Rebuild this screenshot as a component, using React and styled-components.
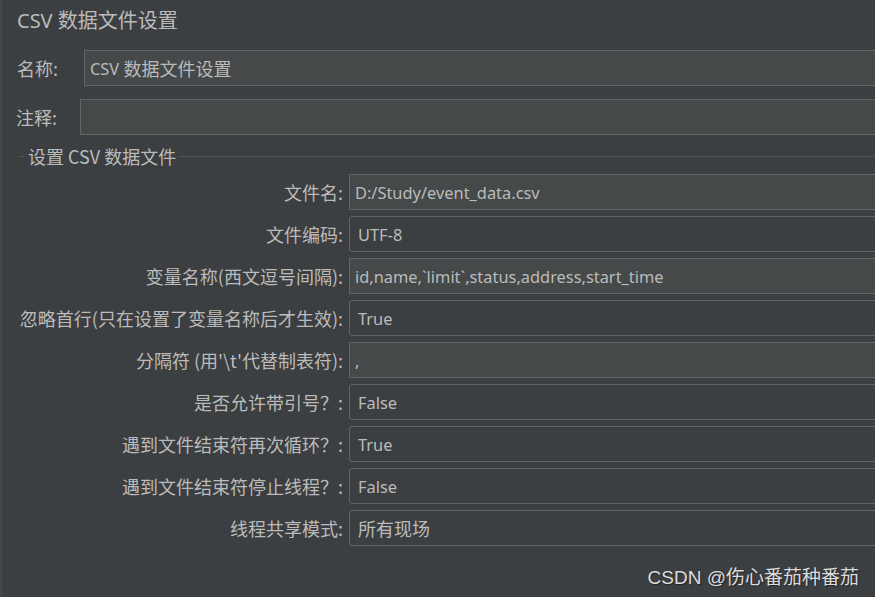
import React from 'react';
import styled, { createGlobalStyle } from 'styled-components';

const GlobalStyle = createGlobalStyle`
  html, body {
    margin: 0;
    padding: 0;
    background: #3c3f41;
  }
`;

const Page = styled.div`
  position: relative;
  width: 875px;
  height: 597px;
  overflow: hidden;
  background: #3c3f41;
  border-left: 2px solid #45484a;
  box-sizing: border-box;
  color: #bbbbbb;
  font-family: "Noto Sans", "Noto Sans CJK SC", sans-serif;
`;

const Inner = styled.div`
  width: 890px;
`;

const Title = styled.h1`
  margin: 0;
  padding: 6px 0 0 15px;
  height: 44px;
  box-sizing: border-box;
  font-size: 20px;
  font-weight: normal;
  line-height: 30px;
`;

const TopRow = styled.div`
  display: flex;
  align-items: center;
  padding-left: ${p => p.indent}px;
  margin-top: ${p => p.top}px;
`;

const TopLabel = styled.span`
  width: ${p => p.width}px;
  font-size: 18px;
  font-family: "Noto Sans CJK SC", sans-serif;
`;

const TextField = styled.div`
  flex: 1;
  height: 36px;
  box-sizing: border-box;
  display: flex;
  align-items: center;
  padding-left: 5px;
  background: #45494a;
  border: 1px solid #646464;
  font-size: 16.4px;
  white-space: pre;
`;

const Combo = styled(TextField)`
  background: #3c3f41;
  border-radius: 3px;
  padding-left: 8px;
`;

const Cjk = styled.span`
  font-size: 18px;
  font-family: "Noto Sans CJK SC", sans-serif;
`;

const Legend = styled.div`
  display: flex;
  align-items: center;
  margin-top: 9px;
  padding-left: 17px;
  height: 24px;
`;

const LegendLine = styled.span`
  flex: ${p => (p.grow ? 1 : 'none')};
  width: ${p => (p.grow ? 'auto' : '5px')};
  height: 1px;
  background: #55585a;
`;

const LegendText = styled.span`
  padding: 0 3px 0 4px;
  font-size: 18px;
  font-family: "Noto Sans CJK SC", sans-serif;
`;

const Grid = styled.div`
  display: grid;
  grid-template-columns: 341px 1fr;
  grid-auto-rows: 36px;
  column-gap: 6px;
  row-gap: 6px;
  margin-top: 6px;
`;

const FieldLabel = styled.span`
  display: flex;
  align-items: center;
  justify-content: flex-end;
  font-size: 18px;
  font-family: "Noto Sans CJK SC", sans-serif;
  white-space: nowrap;
`;

const Watermark = styled.div`
  position: absolute;
  right: 16px;
  bottom: 8px;
  color: #dcdcdc;
  font-size: 19px;
  font-family: "Liberation Sans", "Noto Sans CJK SC", sans-serif;
  text-shadow: 1px 1px 1px rgba(0, 0, 0, 0.45);
`;

const fields = [
  { label: '文件名:', value: 'D:/Study/event_data.csv', kind: 'text' },
  { label: '文件编码:', value: 'UTF-8', kind: 'combo' },
  { label: '变量名称(西文逗号间隔):', value: 'id,name,`limit`,status,address,start_time', kind: 'text' },
  { label: '忽略首行(只在设置了变量名称后才生效):', value: 'True', kind: 'combo' },
  { label: "分隔符 (用'\\t'代替制表符):", value: ',', kind: 'text' },
  { label: '是否允许带引号？:', value: 'False', kind: 'combo' },
  { label: '遇到文件结束符再次循环？:', value: 'True', kind: 'combo' },
  { label: '遇到文件结束符停止线程？:', value: 'False', kind: 'combo' },
  { label: '线程共享模式:', value: <Cjk>所有现场</Cjk>, kind: 'combo' },
];

export default function App() {
  return (
    <Page>
      <GlobalStyle />
      <Inner>
        <Title>CSV 数据文件设置</Title>
        <TopRow indent={15} top={6}>
          <TopLabel width={67}>名称:</TopLabel>
          <TextField>
            CSV <Cjk>数据文件设置</Cjk>
          </TextField>
        </TopRow>
        <TopRow indent={14} top={13}>
          <TopLabel width={64}>注释:</TopLabel>
          <TextField />
        </TopRow>
        <Legend>
          <LegendLine />
          <LegendText>设置 CSV 数据文件</LegendText>
          <LegendLine grow />
        </Legend>
        <Grid>
          {fields.map(f => (
            <React.Fragment key={f.label}>
              <FieldLabel>{f.label}</FieldLabel>
              {f.kind === 'combo' ? <Combo>{f.value}</Combo> : <TextField>{f.value}</TextField>}
            </React.Fragment>
          ))}
        </Grid>
      </Inner>
      <Watermark>CSDN @伤心番茄种番茄</Watermark>
    </Page>
  );
}
